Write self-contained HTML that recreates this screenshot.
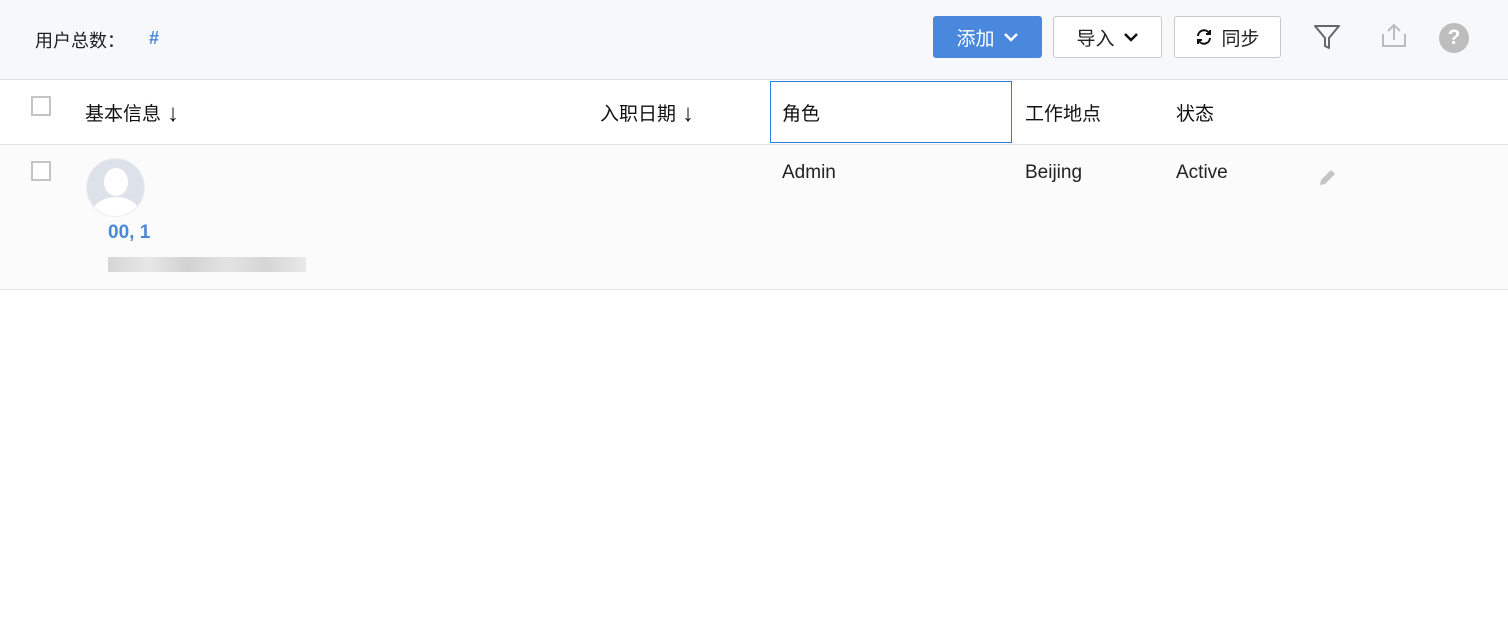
<!DOCTYPE html>
<html><head><meta charset="utf-8"><style>
*{box-sizing:border-box;margin:0;padding:0}
body{width:1508px;height:638px;background:#fff;font-family:"Liberation Sans","Noto Sans CJK SC",sans-serif;color:#222;position:relative;overflow:hidden}
.top{position:absolute;left:0;top:0;width:1508px;height:80px;background:#f7f8fa;border-bottom:1px solid #e0e0e0}
.abs{position:absolute}
.btn{position:absolute;top:16px;height:42px;border:1px solid #c8c8c8;border-radius:3px;background:#fff;font-size:19px;display:flex;align-items:center;justify-content:center;gap:8px}
.cb{position:absolute;width:20px;height:20px;border:2px solid #c4c4c4;background:#fff}
.th{position:absolute;top:99px;font-size:19px;color:#111}
.th b{font-weight:normal;font-size:24px;margin-left:6px;position:relative;top:1px}
.td{position:absolute;top:162px;font-size:19px;color:#222}
</style></head><body>
<div class="top">
<div class="abs" style="left:35px;top:27px;font-size:18px">用户总数：</div>
<div class="abs" style="left:149px;top:28px;font-size:18px;color:#4a88d8;font-weight:bold">#</div>
<div class="btn" style="left:933px;width:109px;background:#4a88dd;border-color:#4a88dd;color:#fff">添加 <svg width="16" height="10" viewBox="0 0 16 10"><path d="M2 2l6 6 6-6" stroke="#fff" stroke-width="2.5" fill="none"/></svg></div>
<div class="btn" style="left:1053px;width:109px">导入 <svg width="16" height="10" viewBox="0 0 16 10"><path d="M2 2l6 6 6-6" stroke="#111" stroke-width="2.5" fill="none"/></svg></div>
<div class="btn" style="left:1174px;width:107px"><svg width="18" height="18" viewBox="0 0 18 18"><path d="M3 8a6 6 0 0 1 11-3M15 10a6 6 0 0 1-11 3" stroke="#111" stroke-width="2" fill="none"/><path d="M15 2v4h-4M3 16v-4h4" stroke="#111" stroke-width="2" fill="none"/></svg>同步</div>
<svg class="abs" style="left:1313px;top:24px" width="28" height="26" viewBox="0 0 28 26"><path d="M2 2h24L16 14v10l-4-2V14z" stroke="#666" stroke-width="2" fill="none" stroke-linejoin="round"/></svg>
<svg class="abs" style="left:1381px;top:22px" width="26" height="26" viewBox="0 0 26 26"><path d="M2 12v12h22V12" stroke="#bbb" stroke-width="2" fill="none"/><path d="M13 18V3M7 9l6-6 6 6" stroke="#bbb" stroke-width="2" fill="none"/></svg>
<div class="abs" style="left:1439px;top:23px;width:30px;height:30px;border-radius:50%;background:#bdbdbd;color:#fff;font-weight:bold;font-size:21px;text-align:center;line-height:30px">?</div>
</div>
<div class="cb" style="left:31px;top:96px"></div>
<div class="th" style="left:85px">基本信息<b>↓</b></div>
<div class="th" style="left:600px">入职日期<b>↓</b></div>
<div class="abs" style="left:770px;top:81px;width:242px;height:62px;border:1px solid #2a7fe0"></div>
<div class="th" style="left:782px">角色</div>
<div class="th" style="left:1025px">工作地点</div>
<div class="th" style="left:1176px">状态</div>
<div class="abs" style="left:0;top:144px;width:1508px;height:146px;background:#fbfbfb;border-top:1px solid #e5e5e5;border-bottom:1px solid #e2e2e2"></div>
<div class="cb" style="left:31px;top:161px"></div>
<div class="abs" style="left:86px;top:158px;width:59px;height:59px;border-radius:50%;background:#dde1ea;border:1px solid #eee;overflow:hidden">
<div class="abs" style="left:17px;top:9px;width:24px;height:28px;border-radius:50%;background:#fff"></div>
<div class="abs" style="left:6px;top:38px;width:46px;height:30px;border-radius:50% 50% 0 0;background:#fff"></div></div>
<div class="abs" style="left:108px;top:222px;font-size:19px;font-weight:bold;color:#4a88d8">00, 1</div>
<div class="abs" style="left:108px;top:257px;width:198px;height:15px;background:linear-gradient(90deg,#ccc,#e2e2e2,#c8c8c8,#ddd,#ccc,#e5e5e5);opacity:.8"></div>
<div class="td" style="left:782px">Admin</div>
<div class="td" style="left:1025px">Beijing</div>
<div class="td" style="left:1176px">Active</div>
<svg class="abs" style="left:1318px;top:167px" width="20" height="20" viewBox="0 0 20 20"><path d="M2 18l1-5L13 3l4 4L7 17z" fill="#c4c4c4"/></svg>
</body></html>
